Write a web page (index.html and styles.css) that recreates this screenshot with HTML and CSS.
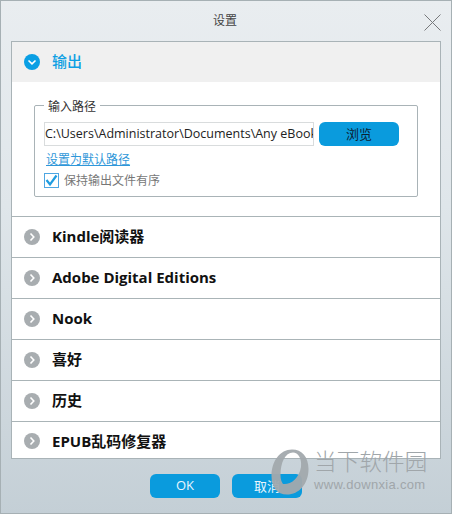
FILE: index.html
```html
<!DOCTYPE html>
<html lang="zh-CN">
<head>
  <meta charset="UTF-8" />
  <title>设置</title>
  <link rel="stylesheet" href="styles.css">
</head>
<body>
<div class="dialog">
  <div class="titlebar">
    <span class="title">设置</span>
    <svg class="close" width="17" height="17" viewBox="0 0 17 17"><path d="M0.5 0.5L16.5 16.5M16.5 0.5L0.5 16.5" stroke="#77797b" stroke-width="1" fill="none"/></svg>
  </div>

  <div class="panel">
    <div class="row row-open">
      <span class="dot dot-blue"><svg width="10" height="10" viewBox="0 0 10 10"><path d="M1.5 3.5L5 6.8L8.5 3.5" stroke="#fff" stroke-width="1.6" fill="none"/></svg></span>
      <span class="row-label">输出</span>
    </div>

    <div class="output-body">
      <fieldset class="path-box">
        <legend>输入路径</legend>
        <div class="path-line">
          <div class="path-input">C:\Users\Administrator\Documents\Any eBook</div>
          <div class="btn btn-browse">浏览</div>
        </div>
        <a class="default-link" href="#">设置为默认路径</a>
        <div class="check-line">
          <span class="checkbox"><svg width="15" height="15" viewBox="0 0 15 15"><path d="M2.5 7L6 11.5L12.5 2.5" stroke="#1f9ce0" stroke-width="2.2" fill="none"/></svg></span>
          <span class="check-label">保持输出文件有序</span>
        </div>
      </fieldset>
    </div>

    <div class="row"><span class="dot"><svg width="10" height="10" viewBox="0 0 10 10"><path d="M3.5 1.5L6.8 5L3.5 8.5" stroke="#fff" stroke-width="1.6" fill="none"/></svg></span><span class="row-label">Kindle阅读器</span></div>
    <div class="row"><span class="dot"><svg width="10" height="10" viewBox="0 0 10 10"><path d="M3.5 1.5L6.8 5L3.5 8.5" stroke="#fff" stroke-width="1.6" fill="none"/></svg></span><span class="row-label">Adobe Digital Editions</span></div>
    <div class="row"><span class="dot"><svg width="10" height="10" viewBox="0 0 10 10"><path d="M3.5 1.5L6.8 5L3.5 8.5" stroke="#fff" stroke-width="1.6" fill="none"/></svg></span><span class="row-label">Nook</span></div>
    <div class="row"><span class="dot"><svg width="10" height="10" viewBox="0 0 10 10"><path d="M3.5 1.5L6.8 5L3.5 8.5" stroke="#fff" stroke-width="1.6" fill="none"/></svg></span><span class="row-label">喜好</span></div>
    <div class="row"><span class="dot"><svg width="10" height="10" viewBox="0 0 10 10"><path d="M3.5 1.5L6.8 5L3.5 8.5" stroke="#fff" stroke-width="1.6" fill="none"/></svg></span><span class="row-label">历史</span></div>
    <div class="row row-last"><span class="dot"><svg width="10" height="10" viewBox="0 0 10 10"><path d="M3.5 1.5L6.8 5L3.5 8.5" stroke="#fff" stroke-width="1.6" fill="none"/></svg></span><span class="row-label">EPUB乱码修复器</span></div>
  </div>

  <div class="footer">
    <div class="btn btn-foot">OK</div>
    <div class="btn btn-foot">取消</div>
  </div>

  <div class="watermark">
    <svg class="wm-logo" width="38" height="46" viewBox="0 0 38 46">
      <path fill-rule="evenodd" fill="#a3a9ad" d="M21 0.5C31 0.5 37.5 8 37.5 20C37.5 35 28 45.5 16 45.5C6 45.5 0.5 38 0.5 27C0.5 12 9 0.5 21 0.5ZM22 3.5C14 3.5 9.5 14 9.5 26C9.5 30 10.5 33 12 35C19 36 28 30 30 18C31 9 27 3.5 22 3.5Z"/>
    </svg>
    <div class="wm-text">
      <div class="wm-name">当下软件园</div>
      <div class="wm-url">www.downxia.com</div>
    </div>
  </div>
</div>
</body>
</html>
```

FILE: styles.css
```css
* {
  box-sizing: border-box;
}

html, body {
  margin: 0;
  padding: 0;
}

body {
  width: 452px;
  height: 514px;
  overflow: hidden;
  font-family: "Open Sans", "Noto Sans CJK SC", sans-serif;
  color: #222;
}

.dialog {
  position: relative;
  width: 452px;
  height: 514px;
  display: flex;
  flex-direction: column;
  border: 1px solid #a6b0b4;
  background: linear-gradient(to bottom, #e9edf0 0%, #dfe6ea 40%, #c4cfd6 100%);
}

.titlebar {
  position: relative;
  height: 40px;
  flex: none;
  display: flex;
  align-items: center;
  justify-content: center;
  padding: 0 2px 2px 0;
}

.title {
  font-size: 12px;
  color: #444;
}

.close {
  position: absolute;
  top: 13px;
  right: 10px;
}

.panel {
  flex: none;
  height: 418px;
  margin: 0 10px;
  background: #fff;
  border: 1px solid #a9b3b7;
  overflow: hidden;
}

.row {
  height: 41px;
  display: flex;
  align-items: center;
  padding-left: 12px;
  gap: 12px;
  border-bottom: 1px solid #aab4b7;
}

.row-last {
  border-bottom: none;
  height: 37px;
}

.row-last .row-label {
  padding-bottom: 1px;
}

.row-open {
  height: 40px;
  background: #f0f0f0;
  border-bottom: none;
}

.row-label {
  font-size: 15px;
  font-weight: 700;
  color: #111;
  padding-bottom: 3px;
}

.row-open .row-label {
  color: #0d9fe3;
  font-weight: 500;
  padding-bottom: 4px;
}

.dot {
  width: 16px;
  height: 16px;
  border-radius: 50%;
  background: #a8adb0;
  display: flex;
  align-items: center;
  justify-content: center;
  flex: none;
}

.dot-blue {
  background: #0a9fe4;
}

.output-body {
  height: 135px;
  padding: 15px 23px 0 22px;
  border-bottom: 1px solid #aab4b7;
}

.path-box {
  margin: 0;
  width: 384px;
  height: 100px;
  padding: 8px 0 0 9px;
  border: 1px solid #a9b3b7;
  border-radius: 2px;
}

.path-box legend {
  margin-left: 0;
  padding: 2px 4px 0;
  font-size: 12px;
  line-height: 15px;
  color: #333;
}

.path-line {
  display: flex;
  gap: 5px;
}

.path-input {
  width: 270px;
  height: 24px;
  padding-left: 0;
  border: 1px solid #d9dcdd;
  font-size: 12.5px;
  line-height: 22px;
  white-space: nowrap;
  overflow: hidden;
  color: #222;
}

.btn {
  background: #0a9bdd;
  border-radius: 6px;
  display: flex;
  align-items: center;
  justify-content: center;
  font-size: 13px;
  padding-bottom: 2px;
}

.btn-browse {
  width: 80px;
  height: 24px;
  color: #0c2233;
}

.default-link {
  display: block;
  margin-top: 5px;
  font-size: 12px;
  line-height: 18px;
  margin-left: 2px;
  color: #2f97d9;
}

.check-line {
  display: flex;
  align-items: center;
  gap: 5px;
  margin-top: 2px;
}

.checkbox {
  width: 15px;
  height: 15px;
  border: 1px solid #4ea6e2;
  display: flex;
  flex: none;
}

.checkbox svg {
  margin: -1px;
}

.check-label {
  font-size: 12px;
  color: #777;
}

.footer {
  flex: 1;
  display: flex;
  justify-content: center;
  gap: 12px;
  padding-top: 15px;
}

.btn-foot {
  width: 70px;
  height: 24px;
  color: #e8f6fd;
  font-size: 13px;
}

.watermark {
  position: absolute;
  left: 270px;
  top: 448px;
  display: flex;
  gap: 5px;
  pointer-events: none;
}

.wm-logo {
  opacity: 0.95;
}

.wm-name {
  font-size: 22.5px;
  line-height: 26px;
  letter-spacing: 0.2px;
  font-weight: 300;
  color: #a0a6aa;
}

.wm-url {
  margin-top: 3px;
  font-family: "Liberation Sans", sans-serif;
  font-size: 13px;
  line-height: 14px;
  letter-spacing: 0.3px;
  color: #a0a6aa;
}
```
